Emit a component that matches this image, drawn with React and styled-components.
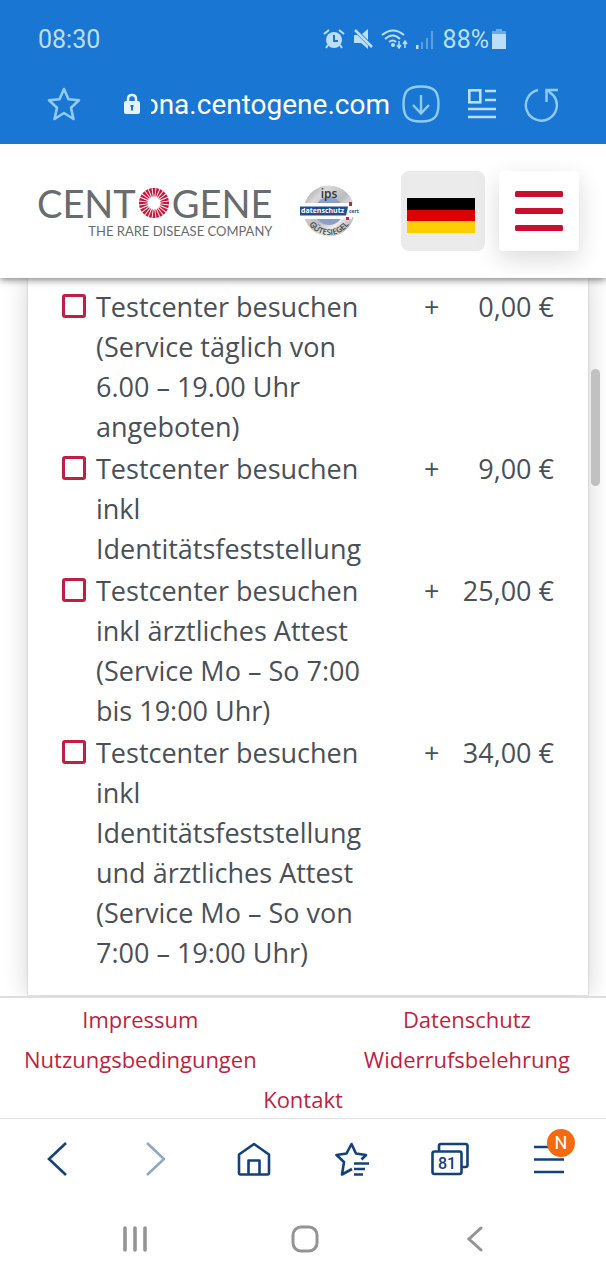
import React from 'react';
import styled, { createGlobalStyle } from 'styled-components';

const colors = {
  blue: '#1976d2',
  paleBlue: '#bbdefb',
  iconBlue: '#90caf9',
  red: '#c8102e',
  linkRed: '#c01f42',
  text: '#495057',
  navy: '#14417b',
  grey: '#949494',
};

const GlobalStyle = createGlobalStyle`
  * {
    box-sizing: border-box;
  }
  body {
    margin: 0;
    background: #fff;
    font-family: 'Open Sans', sans-serif;
  }
  button {
    padding: 0;
    border: 0;
    background: none;
    font: inherit;
    color: inherit;
  }
  svg {
    display: block;
  }
`;

const Screen = styled.div`
  display: flex;
  flex-direction: column;
  min-height: 100vh;
`;

const TopBars = styled.div`
  position: relative;
  z-index: 2;
  background: ${colors.blue};
  font-family: Roboto, sans-serif;
`;

const StatusBar = styled.div`
  display: flex;
  align-items: center;
  justify-content: space-between;
  height: 78px;
  padding: 0 100px 0 38px;
  font-size: 25px;
  color: ${colors.paleBlue};
`;

const StatusIcons = styled.div`
  display: flex;
  align-items: center;
  gap: 8px;
`;

const BatteryLevel = styled.span`
  display: flex;
  align-items: center;
  gap: 3px;
`;

const AddressBar = styled.div`
  display: flex;
  align-items: center;
  height: 66px;
  padding: 0 47px 14px 47px;
`;

const AddressField = styled.label`
  display: flex;
  flex: 1;
  align-items: center;
  gap: 11px;
  min-width: 0;
  margin: 0 12px 0 43px;
`;

const AddressInput = styled.input`
  flex: 1;
  min-width: 0;
  height: 40px;
  padding: 0;
  border: 0;
  outline: 0;
  background: none;
  font: 28px Roboto, sans-serif;
  color: #fff;
`;

const AddressActions = styled.div`
  display: flex;
  align-items: center;
  gap: 27px;
`;

const SiteHeader = styled.header`
  position: relative;
  z-index: 1;
  display: flex;
  align-items: center;
  justify-content: space-between;
  padding: 27px 27px 27px 37px;
  background: #fff;
  box-shadow: 0 1px 8px rgba(0, 0, 0, 0.6);
`;

const Brand = styled.div`
  display: flex;
  align-items: center;
  gap: 28px;
`;

const Logo = styled.a`
  display: flex;
  flex-direction: column;
  align-items: flex-end;
  font-family: Lato, sans-serif;
  color: #696c6e;
  text-decoration: none;
`;

const LogoName = styled.span`
  display: flex;
  align-items: center;
  gap: 2px;
  font-size: 38px;
  line-height: 40px;
`;

const LogoTagline = styled.span`
  font-size: 13px;
  line-height: 16px;
`;

const HeaderButtons = styled.div`
  display: flex;
  gap: 14px;
`;

const HeaderButton = styled.button`
  display: flex;
  align-items: center;
  justify-content: center;
  width: ${({ $wide }) => ($wide ? '84px' : '80px')};
  height: 80px;
  padding: ${({ $wide }) => ($wide ? '8px 4px 0 0' : '0')};
  border-radius: ${({ $wide }) => ($wide ? '8px' : '4px')};
  background: ${({ $wide }) => ($wide ? '#ebebeb' : '#fff')};
  box-shadow: ${({ $wide }) => ($wide ? 'none' : '0 8px 24px rgba(0, 0, 0, 0.15)')};
`;

const Content = styled.main`
  position: relative;
  flex: 1;
  padding: 0 18px 0 28px;
  overflow: hidden;
`;

const Card = styled.section`
  height: 100%;
  padding: 9px 34px 22px 34px;
  background: #fff;
  box-shadow: 0 0 2px rgba(0, 0, 0, 0.2), 0 0 24px rgba(0, 0, 0, 0.18);
`;

const ServiceList = styled.ul`
  display: flex;
  flex-direction: column;
  gap: 2px;
  margin: 0;
  padding: 0;
  list-style: none;
`;

const ServiceRow = styled.label`
  display: grid;
  grid-template-columns: 24px 1fr 16px 114px;
  font-size: 27px;
  line-height: 40px;
  color: ${colors.text};
`;

const Checkbox = styled.input`
  appearance: none;
  width: 24px;
  height: 24px;
  margin: 7px 0 0;
  border: 3px solid ${colors.linkRed};
  border-radius: 3px;
  background: #fff;
`;

const ServiceName = styled.span`
  padding: 0 36px 0 10px;
`;

const Price = styled.span`
  text-align: right;
`;

const ScrollThumb = styled.div`
  position: absolute;
  top: 91px;
  right: 6px;
  width: 9px;
  height: 117px;
  border-radius: 5px;
  background: #c1c1c1;
`;

const SiteFooter = styled.footer`
  position: relative;
  display: flex;
  flex-wrap: wrap;
  justify-content: space-between;
  padding: 1px 24px 0;
  border-top: 2px solid #dedede;
  background: #fff;
`;

const FooterColumn = styled.div`
  display: flex;
  flex-direction: column;
  align-items: center;
  margin-right: ${({ $last }) => ($last ? '12px' : '0')};
`;

const FooterLink = styled.a`
  font-size: 22px;
  line-height: 40px;
  color: ${colors.linkRed};
  text-decoration: none;
`;

const FooterCenter = styled.div`
  display: flex;
  justify-content: center;
  width: 100%;
  height: 39px;
`;

const BrowserNav = styled.nav`
  display: flex;
  align-items: center;
  height: 80px;
  padding: 0 8px;
  border-top: 1px solid #e4e4e4;
  background: #fff;
  font-family: Roboto, sans-serif;
  color: ${colors.navy};
`;

const NavButton = styled.button`
  position: relative;
  display: flex;
  flex: 1;
  justify-content: center;
`;

const Badge = styled.span`
  position: absolute;
  top: -13px;
  right: 23px;
  width: 28px;
  height: 28px;
  border-radius: 50%;
  background: #f56a0f;
  font-size: 18px;
  line-height: 28px;
  color: #fff;
`;

const SystemNav = styled.nav`
  display: flex;
  align-items: center;
  height: 82px;
  padding: 0 46px 0 50px;
  color: ${colors.grey};
`;

const services = [
  { name: 'Testcenter besuchen (Service täglich von 6.00 – 19.00 Uhr angeboten)', price: '0,00 €' },
  { name: 'Testcenter besuchen inkl Identitätsfeststellung', price: '9,00 €' },
  { name: 'Testcenter besuchen inkl ärztliches Attest (Service Mo – So 7:00 bis 19:00 Uhr)', price: '25,00 €' },
  {
    name: 'Testcenter besuchen inkl Identitätsfeststellung und ärztliches Attest (Service Mo – So von 7:00 – 19:00 Uhr)',
    price: '34,00 €',
  },
];

const AlarmIcon = () => (
  <svg width="22" height="20" viewBox="0 0 22 20" fill="none" stroke={colors.paleBlue} strokeWidth="2">
    <path d="M1 5l5-4M21 5l-5-4M5 16l-2 3M17 16l2 3" />
    <circle cx="11" cy="11" r="8" fill={colors.paleBlue} stroke="none" />
    <path d="M11 6v6h4" stroke={colors.blue} />
  </svg>
);

const MuteIcon = () => (
  <svg width="20" height="20" viewBox="0 0 20 20" fill={colors.paleBlue}>
    <path d="M1 6h3.500L15 16.500V20l-7-6H1zM9 5l6-5v11z" />
    <path d="M2 1l17 17" stroke={colors.paleBlue} strokeWidth="2.500" />
  </svg>
);

const WifiIcon = () => (
  <svg width="27" height="20" viewBox="0 0 27 20" fill="none" stroke={colors.paleBlue} strokeWidth="2">
    <path d="M1 6q11-9 22 0M4 10q8-7 15 0M8 13q4-3 7 0" />
    <circle cx="12" cy="16" r="2" fill={colors.paleBlue} stroke="none" />
    <path d="M18 12v7M16 16l2 3 2-3M24 19v-7M22 15l2-3 2 3" strokeWidth="1.500" />
  </svg>
);

const SignalIcon = () => (
  <svg width="19" height="20" viewBox="0 0 19 20" fill={colors.paleBlue}>
    <path d="M0 16h2.500v4H0z" />
    <path d="M5 13h2v7H5zM10 9h2v11h-2zM15 2h2v18h-2z" opacity="0.4" />
  </svg>
);

const BatteryIcon = () => (
  <svg width="14" height="20" viewBox="0 0 14 20" fill={colors.paleBlue}>
    <path d="M4 0h6v2h4v3H0V2h4z" opacity="0.5" />
    <path d="M0 5h14v15H0z" />
  </svg>
);

const StarIcon = () => (
  <svg width="34" height="34" viewBox="0 0 34 34" fill="none" stroke={colors.iconBlue} strokeWidth="2.600" strokeLinejoin="round">
    <path d="M17 2l4.500 10.300L32 13.300l-8 7.400 2.500 11.300L17 26l-9.500 6L10 20.700l-8-7.400 10.500-1z" />
  </svg>
);

const LockIcon = () => (
  <svg width="16" height="22" viewBox="0 0 16 22">
    <path d="M4 9V6q0-4 4-4t4 4v3" fill="none" stroke="#e3f2fd" strokeWidth="2.500" />
    <rect y="8" width="16" height="13" rx="2" fill="#e3f2fd" />
    <path d="M6.500 12h3v2H9v3.500H7V14h-.5z" fill={colors.blue} />
  </svg>
);

const DownloadIcon = () => (
  <svg width="38" height="38" viewBox="0 0 38 38" fill="none" stroke={colors.iconBlue} strokeWidth="2.400">
    <path d="M19 1.500C32 1.500 36.500 6 36.500 19S32 36.500 19 36.500 1.500 32 1.500 19 6 1.500 19 1.500z" />
    <path d="M19 10v18M11 20l8 8.500 8-8.500" />
  </svg>
);

const ReaderIcon = () => (
  <svg width="30" height="32" viewBox="0 0 30 32" fill="none" stroke={colors.paleBlue} strokeWidth="2.600">
    <rect x="2.300" y="2.300" width="11" height="12" />
    <path d="M18 3h11M18 12h11M1 21h28M1 29h28" />
  </svg>
);

const ReloadIcon = () => (
  <svg width="35" height="35" viewBox="0 0 35 35" fill="none" stroke={colors.iconBlue} strokeWidth="2.400">
    <path d="M14 3A15.500 15.500 0 1 0 29.500 8.500L24 3.500" />
    <path d="M34 3H22.500v12" />
  </svg>
);

const Sunburst = () => (
  <svg width="32" height="32" viewBox="-16 -16 32 32" fill="#c8193c">
    {Array.from({ length: 24 }, (_, i) => (
      <path key={i} d="M-.4-6.500L-1.500-15H1.500L.4-6.500z" transform={`rotate(${i * 15})`} />
    ))}
  </svg>
);

const SealIcon = () => (
  <svg width="60" height="54" viewBox="0 0 60 54" role="img" aria-label="ips Gütesiegel">
    <defs>
      <linearGradient id="metal" x1="0" y1="0" x2="1" y2="1">
        <stop offset="0" stopColor="#8f8f8f" />
        <stop offset="0.25" stopColor="#d9d9d9" />
        <stop offset="0.5" stopColor="#bcbcbc" />
        <stop offset="0.7" stopColor="#ededed" />
        <stop offset="1" stopColor="#848484" />
      </linearGradient>
      <path id="sealArc" d="M5 27a24 24 0 0 0 48 0" />
    </defs>
    <circle cx="29" cy="27" r="25.500" fill="url(#metal)" />
    <circle cx="29" cy="27" r="14" fill="#8c9fc6" />
    <path d="M0 19h58v4H0zM0 31h52v4H0z" fill="#fff" />
    <path d="M48 22h12v11H48z" fill="#fff" />
    <path d="M0 22.500h48l-2 9H0z" fill="#214c8d" />
    <path d="M49 18h3v4h-3zM46 33h3v3h-3z" fill="#d2203b" />
    <g fontFamily="Open Sans, sans-serif" fontWeight="700">
      <text x="29" y="14" fontSize="12" fontWeight="600" textAnchor="middle" fill="#333">ips</text>
      <text x="1" y="29" fontSize="7" fill="#fff">datenschutz</text>
      <text x="49" y="29" fontSize="5" fill="#214c8d">cert</text>
      <text fontSize="8" fontWeight="600" fill="#444">
        <textPath href="#sealArc" startOffset="50%" textAnchor="middle">GÜTESIEGEL</textPath>
      </text>
    </g>
  </svg>
);

const FlagIcon = () => (
  <svg width="68" height="35" viewBox="0 0 68 35">
    <path d="M0 0h68v12H0z" />
    <path d="M0 12h68v11H0z" fill="#d00" />
    <path d="M0 23h68v12H0z" fill="#ffce00" />
  </svg>
);

const BurgerIcon = () => (
  <svg width="48" height="41" viewBox="0 0 48 41" fill={colors.red}>
    <rect width="48" height="6" rx="1.500" />
    <rect y="17" width="48" height="6" rx="1.500" />
    <rect y="34" width="48" height="6" rx="1.500" />
  </svg>
);

const Chevron = ({ right, color = 'currentColor' }) => (
  <svg width="20" height="34" viewBox="0 0 20 34" fill="none" stroke={color} strokeWidth="2.600">
    <path d={right ? 'M2 1l17 16L2 33' : 'M19 1L2 17l17 16'} />
  </svg>
);

const HomeIcon = () => (
  <svg width="34" height="34" viewBox="0 0 34 34" fill="none" stroke="currentColor" strokeWidth="2.600" strokeLinejoin="round">
    <path d="M2 12.500L17 2l15 10.500V31q0 1.500-1.500 1.500h-27Q2 32.500 2 31z" />
    <path d="M11.500 32V18.500h11V32" />
  </svg>
);

const BookmarksIcon = () => (
  <svg width="34" height="34" viewBox="0 0 34 34" fill="none" stroke="currentColor" strokeWidth="2.600">
    <path d="M17 27L7 32.500l2-12.500-7.500-7 10-1.500L16.500 2l4.500 9.500 10 1.500-4.500 4.500" strokeLinejoin="round" />
    <path d="M19 21.500h15M19 27h11M19 32.500h9" />
  </svg>
);

const TabsIcon = () => (
  <svg width="38" height="34" viewBox="0 0 38 34" fill="none" stroke="currentColor" strokeWidth="2.600">
    <rect x="1.500" y="9.500" width="29" height="22.500" rx="2" />
    <path d="M8 9V4q0-2 2-2h24.500q2 0 2 2v19q0 2-2 2H31" />
    <text x="16" y="27" fontSize="16" fontWeight="500" textAnchor="middle" fill="currentColor" stroke="none">81</text>
  </svg>
);

const MenuIcon = () => (
  <svg width="30" height="34" viewBox="0 0 30 34" stroke="currentColor" strokeWidth="2.600">
    <path d="M0 5h30M0 17.500h30M0 30h30" />
  </svg>
);

const RecentsIcon = () => (
  <svg width="26" height="26" viewBox="0 0 26 26" stroke="currentColor" strokeWidth="3.600" strokeLinecap="round">
    <path d="M3 2v22M13 2v22M23 2v22" />
  </svg>
);

const HomeKeyIcon = () => (
  <svg width="28" height="28" viewBox="0 0 28 28" fill="none" stroke="currentColor" strokeWidth="3">
    <rect x="2" y="2" width="24" height="24" rx="8" />
  </svg>
);

const BackKeyIcon = () => (
  <svg width="16" height="26" viewBox="0 0 16 26" fill="none" stroke="currentColor" strokeWidth="3" strokeLinecap="round">
    <path d="M14 2L2 13l12 11" />
  </svg>
);

const App = () => {
  return (
    <Screen>
      <GlobalStyle />
      <TopBars>
        <StatusBar>
          <span>08:30</span>
          <StatusIcons>
            <AlarmIcon />
            <MuteIcon />
            <WifiIcon />
            <SignalIcon />
            <BatteryLevel>
              88%
              <BatteryIcon />
            </BatteryLevel>
          </StatusIcons>
        </StatusBar>
        <AddressBar>
          <button type="button" aria-label="Lesezeichen">
            <StarIcon />
          </button>
          <AddressField>
            <LockIcon />
            <AddressInput dir="rtl" aria-label="Adresse" defaultValue="corona.centogene.com" />
          </AddressField>
          <AddressActions>
            <button type="button" aria-label="Herunterladen">
              <DownloadIcon />
            </button>
            <button type="button" aria-label="Leseansicht">
              <ReaderIcon />
            </button>
            <button type="button" aria-label="Neu laden">
              <ReloadIcon />
            </button>
          </AddressActions>
        </AddressBar>
      </TopBars>

      <SiteHeader>
        <Brand>
          <Logo href="#">
            <LogoName>
              CENT
              <Sunburst />
              GENE
            </LogoName>
            <LogoTagline>THE RARE DISEASE COMPANY</LogoTagline>
          </Logo>
          <SealIcon />
        </Brand>
        <HeaderButtons>
          <HeaderButton type="button" $wide aria-label="Sprache">
            <FlagIcon />
          </HeaderButton>
          <HeaderButton type="button" aria-label="Menü">
            <BurgerIcon />
          </HeaderButton>
        </HeaderButtons>
      </SiteHeader>

      <Content>
        <Card>
          <ServiceList>
            {services.map(({ name, price }) => (
              <li key={name}>
                <ServiceRow>
                  <Checkbox type="checkbox" />
                  <ServiceName>{name}</ServiceName>
                  <span>+</span>
                  <Price>{price}</Price>
                </ServiceRow>
              </li>
            ))}
          </ServiceList>
        </Card>
        <ScrollThumb />
      </Content>

      <SiteFooter>
        <FooterColumn>
          <FooterLink href="#">Impressum</FooterLink>
          <FooterLink href="#">Nutzungsbedingungen</FooterLink>
        </FooterColumn>
        <FooterColumn $last>
          <FooterLink href="#">Datenschutz</FooterLink>
          <FooterLink href="#">Widerrufsbelehrung</FooterLink>
        </FooterColumn>
        <FooterCenter>
          <FooterLink href="#">Kontakt</FooterLink>
        </FooterCenter>
      </SiteFooter>

      <BrowserNav>
        <NavButton type="button" aria-label="Zurück">
          <Chevron />
        </NavButton>
        <NavButton type="button" aria-label="Vorwärts">
          <Chevron right color="#90a8bf" />
        </NavButton>
        <NavButton type="button" aria-label="Startseite">
          <HomeIcon />
        </NavButton>
        <NavButton type="button" aria-label="Lesezeichenliste">
          <BookmarksIcon />
        </NavButton>
        <NavButton type="button" aria-label="Tabs">
          <TabsIcon />
        </NavButton>
        <NavButton type="button" aria-label="Menü">
          <MenuIcon />
          <Badge>N</Badge>
        </NavButton>
      </BrowserNav>

      <SystemNav>
        <NavButton type="button" aria-label="Letzte Apps">
          <RecentsIcon />
        </NavButton>
        <NavButton type="button" aria-label="Home">
          <HomeKeyIcon />
        </NavButton>
        <NavButton type="button" aria-label="Zurück">
          <BackKeyIcon />
        </NavButton>
      </SystemNav>
    </Screen>
  );
};

export default App;
